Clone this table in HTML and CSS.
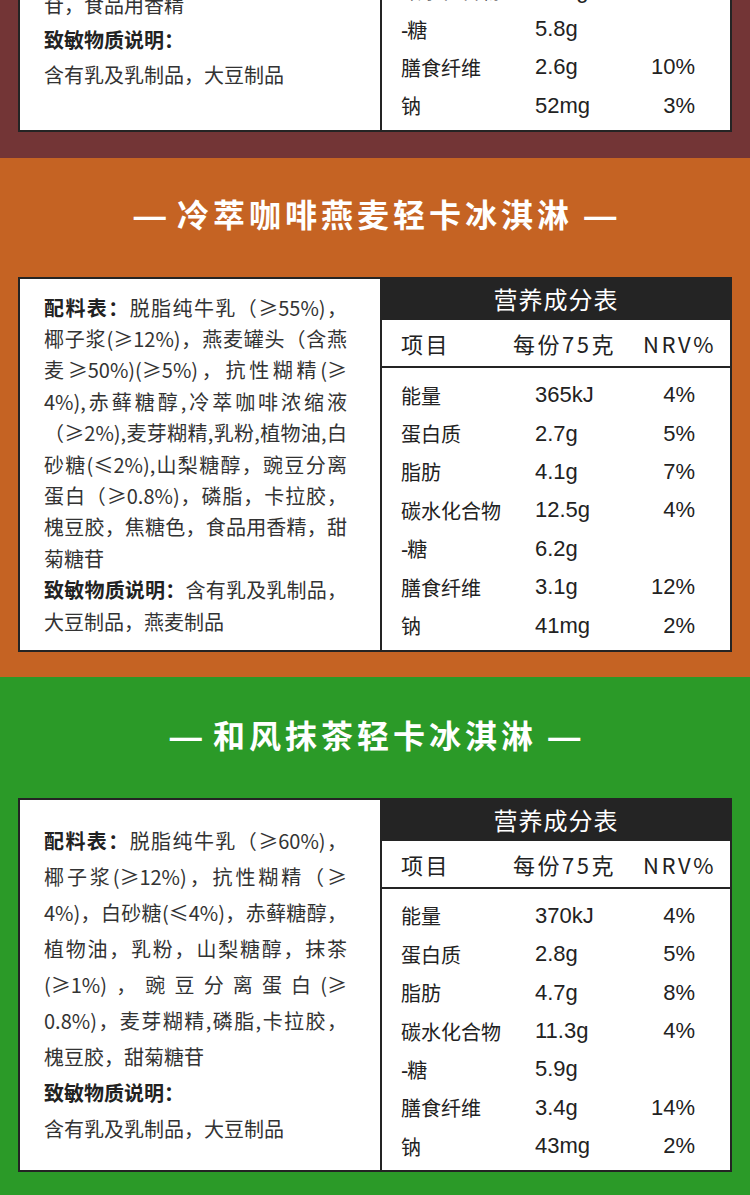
FILE: index.html
```html
<!DOCTYPE html>
<html lang="zh-CN">
<head>
<meta charset="utf-8">
<title>营养成分表</title>
<link rel="stylesheet" href="styles.css">
</head>
<body>
<div class="page">

  <section class="product maroon">
    <div class="card">
      <div class="ingredients roomy lifted">
        <span class="ln"><b>配料表：</b>脱脂纯牛乳（≥55%)，</span>
        <span class="ln">椰子浆(≥12%)，抗性糊精（≥</span>
        <span class="ln">4%)，赤藓糖醇，可可粉(≥2%)，</span>
        <span class="ln">植物油，乳粉，白砂糖(≤2%)，山</span>
        <span class="ln">梨糖醇，豌豆分离蛋白(≥0.8%)，</span>
        <span class="ln">磷脂，卡拉胶，槐豆胶，甜菊糖</span>
        <span class="ln end">苷，食品用香精</span>
        <span class="ln end"><b>致敏物质说明：</b></span>
        <span class="ln end">含有乳及乳制品，大豆制品</span>
      </div>
      <div class="nutrition">
        <div class="nt-title">营养成分表</div>
        <div class="nt-head"><span>项目</span><span>每份75克</span><span>NRV%</span></div>
        <div class="nt-body">
          <div class="nt-row"><span class="lbl">能量</span><span class="num">360kJ</span><span class="num">4%</span></div>
          <div class="nt-row"><span class="lbl">蛋白质</span><span class="num">2.6g</span><span class="num">4%</span></div>
          <div class="nt-row"><span class="lbl">脂肪</span><span class="num">4.3g</span><span class="num">7%</span></div>
          <div class="nt-row"><span class="lbl">碳水化合物</span><span class="num">11.8g</span><span class="num">4%</span></div>
          <div class="nt-row"><span class="lbl"><span class="sub">-</span>糖</span><span class="num">5.8g</span><span class="num"></span></div>
          <div class="nt-row"><span class="lbl">膳食纤维</span><span class="num">2.6g</span><span class="num">10%</span></div>
          <div class="nt-row"><span class="lbl">钠</span><span class="num">52mg</span><span class="num">3%</span></div>
        </div>
      </div>
    </div>
  </section>

  <section class="product orange">
    <h2 class="title"><span class="dash">—</span> 冷萃咖啡燕麦轻卡冰淇淋 <span class="dash">—</span></h2>
    <div class="card">
      <div class="ingredients compact">
        <span class="ln"><b>配料表：</b>脱脂纯牛乳（≥55%)，</span>
        <span class="ln">椰子浆(≥12%)，燕麦罐头（含燕</span>
        <span class="ln">麦≥50%)(≥5%)，抗性糊精(≥</span>
        <span class="ln">4%),赤藓糖醇,冷萃咖啡浓缩液</span>
        <span class="ln">（≥2%),麦芽糊精,乳粉,植物油,白</span>
        <span class="ln">砂糖(≤2%),山梨糖醇，豌豆分离</span>
        <span class="ln">蛋白（≥0.8%)，磷脂，卡拉胶，</span>
        <span class="ln">槐豆胶，焦糖色，食品用香精，甜</span>
        <span class="ln end">菊糖苷</span>
        <span class="ln"><b>致敏物质说明：</b>含有乳及乳制品，</span>
        <span class="ln end">大豆制品，燕麦制品</span>
      </div>
      <div class="nutrition">
        <div class="nt-title">营养成分表</div>
        <div class="nt-head"><span>项目</span><span>每份75克</span><span>NRV%</span></div>
        <div class="nt-body">
          <div class="nt-row"><span class="lbl">能量</span><span class="num">365kJ</span><span class="num">4%</span></div>
          <div class="nt-row"><span class="lbl">蛋白质</span><span class="num">2.7g</span><span class="num">5%</span></div>
          <div class="nt-row"><span class="lbl">脂肪</span><span class="num">4.1g</span><span class="num">7%</span></div>
          <div class="nt-row"><span class="lbl">碳水化合物</span><span class="num">12.5g</span><span class="num">4%</span></div>
          <div class="nt-row"><span class="lbl"><span class="sub">-</span>糖</span><span class="num">6.2g</span><span class="num"></span></div>
          <div class="nt-row"><span class="lbl">膳食纤维</span><span class="num">3.1g</span><span class="num">12%</span></div>
          <div class="nt-row"><span class="lbl">钠</span><span class="num">41mg</span><span class="num">2%</span></div>
        </div>
      </div>
    </div>
  </section>

  <section class="product green">
    <h2 class="title"><span class="dash">—</span> 和风抹茶轻卡冰淇淋 <span class="dash">—</span></h2>
    <div class="card">
      <div class="ingredients roomy">
        <span class="ln"><b>配料表：</b>脱脂纯牛乳（≥60%)，</span>
        <span class="ln">椰子浆(≥12%)，抗性糊精（≥</span>
        <span class="ln">4%)，白砂糖(≤4%)，赤藓糖醇，</span>
        <span class="ln">植物油，乳粉，山梨糖醇，抹茶</span>
        <span class="ln">(≥1%)，豌豆分离蛋白(≥</span>
        <span class="ln">0.8%)，麦芽糊精,磷脂,卡拉胶，</span>
        <span class="ln end">槐豆胶，甜菊糖苷</span>
        <span class="ln end"><b>致敏物质说明：</b></span>
        <span class="ln end">含有乳及乳制品，大豆制品</span>
      </div>
      <div class="nutrition">
        <div class="nt-title">营养成分表</div>
        <div class="nt-head"><span>项目</span><span>每份75克</span><span>NRV%</span></div>
        <div class="nt-body">
          <div class="nt-row"><span class="lbl">能量</span><span class="num">370kJ</span><span class="num">4%</span></div>
          <div class="nt-row"><span class="lbl">蛋白质</span><span class="num">2.8g</span><span class="num">5%</span></div>
          <div class="nt-row"><span class="lbl">脂肪</span><span class="num">4.7g</span><span class="num">8%</span></div>
          <div class="nt-row"><span class="lbl">碳水化合物</span><span class="num">11.3g</span><span class="num">4%</span></div>
          <div class="nt-row"><span class="lbl"><span class="sub">-</span>糖</span><span class="num">5.9g</span><span class="num"></span></div>
          <div class="nt-row"><span class="lbl">膳食纤维</span><span class="num">3.4g</span><span class="num">14%</span></div>
          <div class="nt-row"><span class="lbl">钠</span><span class="num">43mg</span><span class="num">2%</span></div>
        </div>
      </div>
    </div>
  </section>

</div>
</body>
</html>
```
FILE: styles.css
```css
html, body {
  margin: 0;
  padding: 0;
}

body {
  width: 750px;
  font-family: "Noto Sans CJK SC", "Liberation Sans", sans-serif;
  color: #333;
}

.page {
  display: flex;
  flex-direction: column;
}

.product {
  display: flex;
  flex-direction: column;
  padding: 35px 18px 25px;
}

.maroon {
  background: #733536;
  height: 158px;
  box-sizing: border-box;
  padding-top: 0;
  padding-bottom: 26px;
  justify-content: flex-end;
  overflow: hidden;
}

.orange {
  background: #c56323;
}

.green {
  background: #2b9a28;
  padding-top: 37px;
}

.title {
  margin: 0 0 44px;
  height: 40px;
  line-height: 40px;
  text-align: center;
  color: #fff;
  font-size: 32px;
  font-weight: 700;
  letter-spacing: 4px;
  white-space: nowrap;
}

.title .dash {
  font-family: "Liberation Sans", sans-serif;
  font-weight: 700;
  letter-spacing: 0;
}

.card {
  flex: none;
  display: flex;
  background: #fff;
  border: 2px solid #242424;
}

/* ingredient column */
.ingredients {
  width: 362px;
  flex: none;
  box-sizing: border-box;
  border-right: 2px solid #242424;
  padding: 0 33px 0 24px;
  display: flex;
  flex-direction: column;
  justify-content: center;
  font-size: 20px;
  color: #333;
}

.ingredients.compact {
  line-height: 31.4px;
}

.ingredients.roomy {
  line-height: 36px;
}

.ingredients.lifted {
  line-height: 35px;
  padding-bottom: 21px;
}

.ingredients b {
  font-weight: 700;
  color: #222;
}

.ln {
  display: block;
  white-space: nowrap;
  text-align: justify;
  text-align-last: justify;
}

.ln.end {
  text-align-last: left;
}

/* nutrition column */
.nutrition {
  flex: 1;
  display: flex;
  flex-direction: column;
  color: #222;
}

.nt-title {
  height: 41px;
  line-height: 40px;
  background: #242424;
  color: #fff;
  text-align: center;
  font-size: 24px;
  letter-spacing: 1px;
}

.nt-head {
  display: grid;
  grid-template-columns: 112px 130px auto;
  align-items: center;
  height: 46px;
  padding-left: 19px;
  border-bottom: 2px solid #242424;
  font-size: 22px;
  letter-spacing: 2.5px;
}

.nt-body {
  padding: 8px 35px 5px 19px;
}

.nt-row {
  display: grid;
  grid-template-columns: 134px 1fr auto;
  align-items: center;
  height: 38.4px;
}

.lbl {
  font-size: 20px;
}

.lbl .sub {
  font-family: "Liberation Sans", sans-serif;
  font-size: 22px;
  letter-spacing: -1px;
}

.num {
  font-family: "Liberation Sans", "Noto Sans CJK SC", sans-serif;
  font-size: 22px;
  text-align: right;
}

.nt-row .num:nth-child(2) {
  text-align: left;
}
```
